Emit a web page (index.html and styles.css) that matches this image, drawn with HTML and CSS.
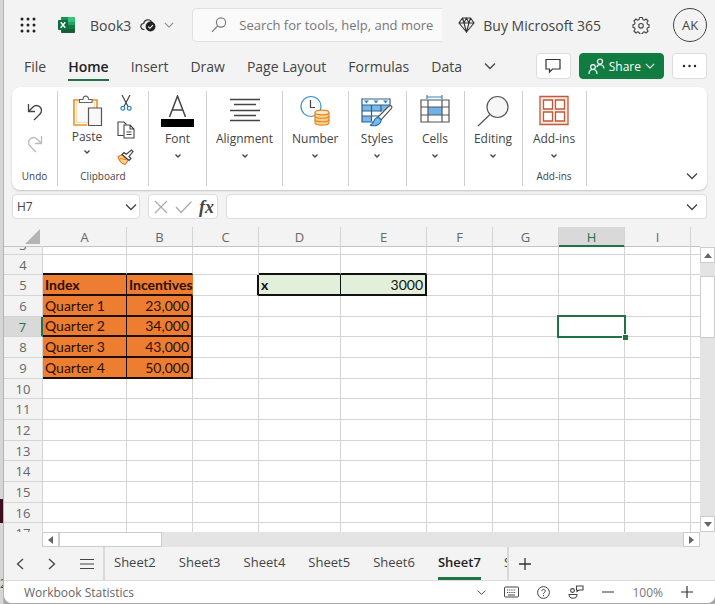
FILE: index.html
```html
<!DOCTYPE html>
<html lang="en">
<head>
    <meta charset="UTF-8">
    <meta name="viewport" content="width=device-width, initial-scale=1.0">
    <title>Book3</title>
    <link rel="stylesheet" href="styles.css">
</head>
<body>
    <svg width="0" height="0" class="defs">
        <symbol id="chev" viewBox="0 0 12 12"><path d="M1 3.5l5 5 5-5" fill="none" stroke="currentColor" stroke-width="1.3"/></symbol>
        <symbol id="chev-small" viewBox="0 0 6 6"><path d="M.5 1.5L3 4l2.5-2.5" fill="none" stroke="currentColor" stroke-width="1.3"/></symbol>
        <symbol id="lens" viewBox="0 0 16 16"><circle cx="10" cy="5.5" r="4.6" fill="none" stroke="currentColor" stroke-width="1.1"/><path d="M6.7 8.8L1 14.8" stroke="currentColor" stroke-width="1.2"/></symbol>
    </svg>

    <div class="backdrop">
        <div class="backdrop-mark"></div>
        <div class="backdrop-text">20</div>
    </div>

    <div class="app">
        <header class="titlebar">
            <button class="icon-btn launcher" aria-label="App launcher">
                <svg width="16" height="16" viewBox="0 0 16 16" fill="#222">
                    <circle cx="2" cy="2" r="1.5"/><circle cx="8" cy="2" r="1.5"/><circle cx="14" cy="2" r="1.5"/>
                    <circle cx="2" cy="8" r="1.5"/><circle cx="8" cy="8" r="1.5"/><circle cx="14" cy="8" r="1.5"/>
                    <circle cx="2" cy="14" r="1.5"/><circle cx="8" cy="14" r="1.5"/><circle cx="14" cy="14" r="1.5"/>
                </svg>
            </button>
            <svg class="logo" width="18" height="18" viewBox="0 0 18 18">
                <rect x="4" y="1" width="14" height="16" rx="1.5" fill="#21a366"/>
                <rect x="4" y="1" width="7" height="5" fill="#169154"/>
                <rect x="11" y="1" width="7" height="5" rx="1" fill="#33c481"/>
                <rect x="4" y="9" width="14" height="8" rx="1.5" fill="#185c37"/>
                <rect x="11" y="9" width="7" height="4" fill="#107c41"/>
                <rect x="1" y="4" width="10" height="10" rx="1" fill="#0f6f3c"/>
                <path d="M3.700 6.300l4.600 5.400M8.300 6.300l-4.600 5.400" stroke="#fff" stroke-width="1.5"/>
            </svg>
            <span class="book-name">Book3</span>
            <button class="icon-btn saved" aria-label="Saved">
                <svg width="16" height="14" viewBox="0 0 16 14">
                    <path d="M4.5 11.5H4A3 3 0 0 1 3.700 5.5 4.2 4.2 0 0 1 11.8 4.5" fill="none" stroke="#333" stroke-width="1.2"/>
                    <circle cx="10.5" cy="8.5" r="4.9" fill="#222"/>
                    <path d="M8.2 8.7l1.7 1.6 3-3.2" fill="none" stroke="#fff" stroke-width="1.1"/>
                </svg>
            </button>
            <button class="icon-btn book-menu" aria-label="File menu"><svg width="10" height="10"><use href="#chev"/></svg></button>
            <div class="search">
                <svg width="16" height="16"><use href="#lens"/></svg>
                <input type="text" aria-label="Search" placeholder="Search for tools, help, and more">
            </div>
            <button class="buy">
                <svg width="17" height="16" viewBox="0 0 17 16" fill="none" stroke="#333" stroke-width="1.1">
                    <path d="M4.5 1h8L16 6l-7.5 9L1 6zM1 6h15M4.5 1l1.5 5 2.5 9L11 6l1.5-5M6 6l2.5-5L11 6"/>
                </svg>
                Buy Microsoft 365
            </button>
            <button class="icon-btn settings" aria-label="Settings">
                <svg width="18" height="18" viewBox="0 0 18 18" fill="none" stroke="#444" stroke-width="1.1" stroke-linejoin="round">
                    <path d="M7.5 1.5h3l.4 2.1 1.4.6 1.8-1.2 2 2-1.2 1.8.6 1.4 1.5.3v2.9l-1.5.4-.6 1.4 1.2 1.8-2 2-1.8-1.2-1.4.6-.4 1.6h-3l-.4-1.6-1.4-.6-1.8 1.2-2-2 1.2-1.8-.6-1.4-1.5-.4V8.5l1.5-.3.6-1.4L1.9 5l2-2 1.8 1.2 1.4-.6z"/>
                    <circle cx="9" cy="9.8" r="2.3"/>
                </svg>
            </button>
            <button class="avatar">AK</button>
        </header>

        <nav class="menu">
            <button>File</button>
            <button class="active">Home</button>
            <button>Insert</button>
            <button>Draw</button>
            <button>Page Layout</button>
            <button>Formulas</button>
            <button>Data</button>
            <button class="more-tabs" aria-label="More tabs"><svg width="12" height="12"><use href="#chev"/></svg></button>
            <div class="actions">
                <button class="box-btn" aria-label="Comments">
                    <svg width="16" height="16" viewBox="0 0 16 16" fill="none" stroke="#333" stroke-width="1.2"><path d="M1 1.5h14v9.5H7.5L4.5 14v-3H1z"/></svg>
                </button>
                <button class="share">
                    <svg width="17" height="17" viewBox="0 0 17 17" fill="none" stroke="#fff" stroke-width="1.2">
                        <circle cx="5" cy="9" r="2.3"/><path d="M1 16c0-6 8-6 8 0"/>
                        <circle cx="12" cy="3.5" r="2.5"/><path d="M8.8 9c1-3.5 7-3 7.2 1.5"/>
                    </svg>
                    Share
                    <svg width="10" height="10"><use href="#chev"/></svg>
                </button>
                <button class="box-btn" aria-label="More options">
                    <svg width="15" height="4" viewBox="0 0 15 4" fill="#222"><circle cx="2" cy="2" r="1.2"/><circle cx="7.5" cy="2" r="1.2"/><circle cx="13" cy="2" r="1.2"/></svg>
                </button>
            </div>
        </nav>

        <section class="ribbon">
            <div class="group undo">
                <button class="icon-btn" aria-label="Undo">
                    <svg width="16" height="18" viewBox="0 0 16 18" fill="none" stroke="#444" stroke-width="1.3"><path d="M1.5 1v7.5H8M1.5 8.5L6 4c3-3 8-1 8.5 3 .2 2-.5 3-2 4.5L7 17"/></svg>
                </button>
                <button class="icon-btn" aria-label="Redo">
                    <svg width="16" height="18" viewBox="0 0 16 18" fill="none" stroke="#bbb" stroke-width="1.3"><path d="M14.5 1v7.5H8M14.5 8.5L10 4C7 1 2 3 1.5 7c-.2 2 .5 3 2 4.5L9 17"/></svg>
                </button>
                <span class="group-name">Undo</span>
            </div>
            <div class="group clipboard">
                <div class="clip-tools">
                    <button class="tool">
                        <svg width="31" height="32" viewBox="0 0 31 32" fill="none">
                            <path d="M9 5H2v25h13M19 5h6v8" stroke="#e8912d" stroke-width="1.6"/>
                            <path d="M4.5 7h18v6h-6v14.5h-12z" fill="#fafafa" stroke="#f7d9ad"/>
                            <path d="M7.5 7.5V4.5H11C11 0 16.5 0 16.5 4.5H20v3z" fill="#fff" stroke="#666" stroke-width="1.1"/>
                            <path d="M16.5 13h13v17.5h-13z" fill="#f8f8f8" stroke="#555" stroke-width="1.2"/>
                        </svg>
                        Paste
                        <svg class="drop" width="6" height="6"><use href="#chev-small"/></svg>
                    </button>
                    <div class="clip-side">
                        <button class="icon-btn" aria-label="Cut">
                            <svg width="12" height="16" viewBox="0 0 12 16" fill="none"><path d="M2 0l6 11.5M10 0L4 11.5" stroke="#444" stroke-width="1.2"/><circle cx="2.8" cy="13.3" r="1.9" stroke="#2f86c9" stroke-width="1.2"/><circle cx="9.2" cy="13.3" r="1.9" stroke="#2f86c9" stroke-width="1.2"/></svg>
                        </button>
                        <button class="icon-btn" aria-label="Copy">
                            <svg width="18" height="18" viewBox="0 0 18 18" fill="#fff" stroke="#444" stroke-width="1.1"><path d="M6.5 14.5h-5.5V1h6l2.5 2.5"/><path d="M7 4h6l4 4v9H7zM13 4v4h4M9.5 11h5M9.5 13.5h5"/></svg>
                        </button>
                        <button class="icon-btn" aria-label="Format painter">
                            <svg width="17" height="16" viewBox="0 0 17 16" fill="none"><path d="M1 7.5l4-1.5 6 5.5-3 4c-3-.5-6-4-7-8z" fill="#fbd59a" stroke="#e07b1a" stroke-width="1.2"/><path d="M3 9.500l6 1" stroke="#e07b1a" stroke-width="1.2"/><path d="M5 5.5l2-2 2.2 1.8L14.5 1 16 2.5l-4 5 2 2-2 2z" fill="#fff" stroke="#444" stroke-width="1.2"/></svg>
                        </button>
                    </div>
                </div>
                <span class="group-name">Clipboard</span>
            </div>
            <div class="group">
                <button class="tool">
                    <svg width="33" height="32" viewBox="0 0 33 32"><path d="M8.5 22L16.5 1l8 21M11.5 15h10" fill="none" stroke="#444" stroke-width="1.5"/><rect y="24" width="33" height="8"/></svg>
                    Font
                    <svg class="drop" width="6" height="6"><use href="#chev-small"/></svg>
                </button>
            </div>
            <div class="group">
                <button class="tool">
                    <svg width="30" height="32" viewBox="0 0 30 32" stroke="#444" stroke-width="1.3"><path d="M0 4.5h30M4 9.5h22M0 15.5h30M4 20.5h22M0 25.5h30"/></svg>
                    Alignment
                    <svg class="drop" width="6" height="6"><use href="#chev-small"/></svg>
                </button>
            </div>
            <div class="group">
                <button class="tool">
                    <svg width="30" height="32" viewBox="0 0 30 32" fill="none">
                        <circle cx="11" cy="11.5" r="10" stroke="#3c93c9" stroke-width="1.2" fill="#fafcfe"/><path d="M10.5 5v7.5H15" stroke="#444" stroke-width="1.2"/>
                        <path d="M15 17.5v10c0 3.5 14 3.5 14 0v-10" fill="#fbd28c" stroke="#e0882a" stroke-width="1.2"/>
                        <ellipse cx="22" cy="17.5" rx="7" ry="2.3" fill="#fde9c9" stroke="#e0882a" stroke-width="1.2"/>
                        <path d="M15 21c0 3 14 3 14 0M15 24.500c0 3 14 3 14 0" stroke="#e0882a" stroke-width="1.2"/>
                    </svg>
                    Number
                    <svg class="drop" width="6" height="6"><use href="#chev-small"/></svg>
                </button>
            </div>
            <div class="group">
                <button class="tool">
                    <svg width="32" height="32" viewBox="0 0 32 32" fill="none">
                        <path d="M1 4h28v23H1z" fill="#fff"/><path d="M1 10h28v6H1zM1 21h10v6H1z" fill="#79b8ea"/>
                        <path d="M20 16H1M29 10H1M18 21H1M10.5 10v16M20 10v7M14 27H1V4h28v6" stroke="#335f86" stroke-width="1.2"/>
                        <path d="M3 5.5h5l-2.5 3zM12.5 5.5h5l-2.5 3zM22 5.5h5l-2.5 3z" fill="#2f86c9"/>
                        <path d="M17 22L27 12c3-2.5 5-1 3 2L20 25z" fill="#fff" stroke="#555" stroke-width="1.2"/>
                        <path d="M9 30c4 0 3-6 7-7.5 3 0 5 2.5 3.5 5C17.5 31 12 31.5 9 30z" fill="#79b8ea" stroke="#1f6fb0" stroke-width="1.1"/>
                    </svg>
                    Styles
                    <svg class="drop" width="6" height="6"><use href="#chev-small"/></svg>
                </button>
            </div>
            <div class="group">
                <button class="tool">
                    <svg width="30" height="32" viewBox="0 0 30 32" fill="none">
                        <path d="M7 0v4M22 0v4M7 2h15" stroke="#2f86c9" stroke-width="1.2"/>
                        <path d="M8 12h14v8H8z" fill="#6fb2ea"/>
                        <path d="M1 5h28v22H1zM8 5v22M22 5v22M1 12h28M1 20h28" stroke="#555" stroke-width="1.2"/>
                    </svg>
                    Cells
                    <svg class="drop" width="6" height="6"><use href="#chev-small"/></svg>
                </button>
            </div>
            <div class="group">
                <button class="tool">
                    <svg width="32" height="32" viewBox="0 0 32 32" fill="none" stroke="#555" stroke-width="1.2"><circle cx="20.5" cy="12" r="10.5" fill="#f7f7f7"/><path d="M13 19.5L1 31"/></svg>
                    Editing
                    <svg class="drop" width="6" height="6"><use href="#chev-small"/></svg>
                </button>
            </div>
            <div class="group addins">
                <button class="tool">
                    <svg width="30" height="32" viewBox="0 0 30 32" fill="#fff" stroke="#bf5a3a" stroke-width="1.3"><path d="M1 1.5h28v28H1z" fill="#fbe9e2"/><path d="M4.5 5h9v9h-9zM16.5 5h9v9h-9zM4.5 17h9v9h-9zM16.5 17h9v9h-9z"/></svg>
                    Add-ins
                    <svg class="drop" width="6" height="6"><use href="#chev-small"/></svg>
                </button>
                <span class="group-name">Add-ins</span>
            </div>
            <button class="icon-btn collapse" aria-label="Collapse ribbon"><svg width="12" height="12"><use href="#chev"/></svg></button>
        </section>

        <div class="formula-bar">
            <div class="name-box">
                <input type="text" aria-label="Name box" value="H7">
                <button class="icon-btn" aria-label="Names"><svg width="12" height="12"><use href="#chev"/></svg></button>
            </div>
            <div class="fx-box">
                <button class="icon-btn" aria-label="Cancel"><svg width="14" height="14" viewBox="0 0 14 14"><path d="M1 1l12 12M13 1L1 13" stroke="#aaa" stroke-width="1.2"/></svg></button>
                <button class="icon-btn" aria-label="Enter"><svg width="17" height="14" viewBox="0 0 17 14"><path d="M1 7l5 5.5L16.5 1.5" fill="none" stroke="#aaa" stroke-width="1.2"/></svg></button>
                <button class="fx">fx</button>
            </div>
            <div class="formula">
                <input type="text" aria-label="Formula">
                <button class="icon-btn" aria-label="Expand formula bar"><svg width="12" height="12"><use href="#chev"/></svg></button>
            </div>
        </div>

        <main class="sheet">
            <div class="grid">
                <table>
                    <colgroup>
                        <col class="c-head"><col class="c-a"><col class="c-std"><col class="c-std"><col class="c-d"><col class="c-e"><col class="c-std"><col class="c-std"><col class="c-std"><col class="c-std"><col>
                    </colgroup>
                    <thead>
                        <tr>
                            <th class="corner"><svg width="15" height="15" viewBox="0 0 15 15"><path d="M15 0v15H0z" fill="#b5b5b5"/></svg></th>
                            <th>A</th><th>B</th><th>C</th><th>D</th><th>E</th><th>F</th><th>G</th><th class="on">H</th><th>I</th><th></th>
                        </tr>
                    </thead>
                    <tbody>
                        <tr class="cut"><th><div>3</div></th><td></td><td></td><td></td><td></td><td></td><td></td><td></td><td></td><td></td><td></td></tr>
                        <tr><th>4</th><td class="line-b"></td><td class="line-b"></td><td></td><td class="line-b"></td><td class="line-b"></td><td></td><td></td><td></td><td></td><td></td></tr>
                        <tr><th>5</th><td class="orange bold">Index</td><td class="orange bold head-b">Incentives</td><td class="line-r"></td><td class="green bold">x</td><td class="green num">3000</td><td></td><td></td><td></td><td></td><td></td></tr>
                        <tr><th>6</th><td class="orange">Quarter 1</td><td class="orange num">23,000</td><td></td><td></td><td></td><td></td><td></td><td></td><td></td><td></td></tr>
                        <tr><th class="on">7</th><td class="orange">Quarter 2</td><td class="orange num">34,000</td><td></td><td></td><td></td><td></td><td></td><td class="selected"><div class="cursor"></div></td><td></td><td></td></tr>
                        <tr><th>8</th><td class="orange">Quarter 3</td><td class="orange num">43,000</td><td></td><td></td><td></td><td></td><td></td><td></td><td></td><td></td></tr>
                        <tr><th>9</th><td class="orange">Quarter 4</td><td class="orange num">50,000</td><td></td><td></td><td></td><td></td><td></td><td></td><td></td><td></td></tr>
                        <tr><th>10</th><td></td><td></td><td></td><td></td><td></td><td></td><td></td><td></td><td></td><td></td></tr>
                        <tr><th>11</th><td></td><td></td><td></td><td></td><td></td><td></td><td></td><td></td><td></td><td></td></tr>
                        <tr><th>12</th><td></td><td></td><td></td><td></td><td></td><td></td><td></td><td></td><td></td><td></td></tr>
                        <tr><th>13</th><td></td><td></td><td></td><td></td><td></td><td></td><td></td><td></td><td></td><td></td></tr>
                        <tr><th>14</th><td></td><td></td><td></td><td></td><td></td><td></td><td></td><td></td><td></td><td></td></tr>
                        <tr><th>15</th><td></td><td></td><td></td><td></td><td></td><td></td><td></td><td></td><td></td><td></td></tr>
                        <tr><th>16</th><td></td><td></td><td></td><td></td><td></td><td></td><td></td><td></td><td></td><td></td></tr>
                        <tr><th>17</th><td></td><td></td><td></td><td></td><td></td><td></td><td></td><td></td><td></td><td></td></tr>
                    </tbody>
                </table>
            </div>
            <div class="vscroll">
                <button aria-label="Scroll up"><svg width="8" height="5" viewBox="0 0 8 5"><path d="M4 0l4 5H0z" fill="#666"/></svg></button>
                <div class="vthumb"></div>
                <button class="end" aria-label="Scroll down"><svg width="8" height="5" viewBox="0 0 8 5"><path d="M4 5l4-5H0z" fill="#666"/></svg></button>
            </div>
        </main>
        <div class="hscroll">
            <button aria-label="Scroll left"><svg width="5" height="8" viewBox="0 0 5 8"><path d="M0 4l5-4v8z" fill="#666"/></svg></button>
            <div class="hthumb"></div>
            <button class="end" aria-label="Scroll right"><svg width="5" height="8" viewBox="0 0 5 8"><path d="M5 4L0 0v8z" fill="#666"/></svg></button>
        </div>

        <div class="tabs">
            <div class="tab-nav">
                <button class="icon-btn" aria-label="Previous sheet"><svg width="8" height="12" viewBox="0 0 8 12"><path d="M7 1L1.5 6 7 11" fill="none" stroke="#444" stroke-width="1.3"/></svg></button>
                <button class="icon-btn" aria-label="Next sheet"><svg width="8" height="12" viewBox="0 0 8 12"><path d="M1 1l5.5 5L1 11" fill="none" stroke="#444" stroke-width="1.3"/></svg></button>
                <button class="icon-btn" aria-label="All sheets"><svg width="14" height="12" viewBox="0 0 14 12"><path d="M0 1.5h14M0 6h14M0 10.5h14" stroke="#444" stroke-width="1.2"/></svg></button>
            </div>
            <div class="tab-list">
                <button>Sheet2</button>
                <button>Sheet3</button>
                <button>Sheet4</button>
                <button>Sheet5</button>
                <button>Sheet6</button>
                <button class="active">Sheet7</button>
                <button>Sheet8</button>
            </div>
            <button class="icon-btn add" aria-label="New sheet"><svg width="12" height="12" viewBox="0 0 12 12"><path d="M6 0v12M0 6h12" stroke="#333" stroke-width="1.3"/></svg></button>
        </div>

        <footer class="status">
            <span class="stats">Workbook Statistics</span>
            <button class="icon-btn" aria-label="Options"><svg width="9" height="9"><use href="#chev"/></svg></button>
            <button class="icon-btn" aria-label="Keyboard">
                <svg width="15" height="12" viewBox="0 0 15 12" fill="none" stroke="#444"><rect x=".5" y="1" width="14" height="10" rx="1"/><path d="M3 4h9M3 6.5h9" stroke-dasharray="1.2 1"/><path d="M4 9h7"/></svg>
            </button>
            <button class="icon-btn" aria-label="Help">
                <svg width="13" height="13" viewBox="0 0 13 13" fill="none" stroke="#444"><circle cx="6.5" cy="6.5" r="5.9"/><path d="M4.8 5.2c0-2.500 3.700-2.200 3.500 0-.1 1.200-1.800 1.300-1.800 2.800M6.5 9v1.2"/></svg>
            </button>
            <button class="icon-btn" aria-label="Feedback">
                <svg width="16" height="14" viewBox="0 0 16 14" fill="none" stroke="#444" stroke-width="1.1"><circle cx="4.5" cy="5.5" r="1.9"/><path d="M1 9.5h8c0 5-8 5-8 0zM8.5 1h6.5v4h-4L9 6.500 9 5h-.5z"/></svg>
            </button>
            <button class="icon-btn" aria-label="Zoom out"><svg width="12" height="12" viewBox="0 0 12 12"><path d="M0 6h12" stroke="#333" stroke-width="1.2"/></svg></button>
            <span class="zoom">100%</span>
            <button class="icon-btn" aria-label="Zoom in"><svg width="12" height="12" viewBox="0 0 12 12"><path d="M6 0v12M0 6h12" stroke="#333" stroke-width="1.2"/></svg></button>
        </footer>
    </div>
</body>
</html>
```
FILE: styles.css
```css
* {
    box-sizing: border-box;
}

body {
    display: flex;
    height: 100vh;
    margin: 0;
    overflow: hidden;
    background-color: #a8a8a8;
    color: #444;
    font-family: "Open Sans", "Noto Sans", sans-serif;
    font-size: 13px;
}

button, input {
    margin: 0;
    padding: 0;
    border: none;
    background: none;
    color: inherit;
    font: inherit;
}

svg {
    display: block;
    flex: none;
}

.defs {
    position: absolute;
}

.icon-btn {
    display: flex;
    align-items: center;
    justify-content: center;
}

/* strip of the window behind */
.backdrop {
    display: flex;
    flex-direction: column;
    justify-content: flex-end;
    width: 4px;
    overflow: hidden;
    background-color: #d6d6d6;
    border-right: 1px solid #b4b4b4;
}

.backdrop-mark {
    height: 24px;
    margin-bottom: 52px;
    background-color: #3f0d22;
}

.backdrop-text {
    height: 29px;
    font-size: 12px;
}

.app {
    display: flex;
    flex: 1;
    flex-direction: column;
    min-width: 0;
    margin-bottom: 1px;
    overflow: hidden;
    background-color: #f3f3f3;
    border-radius: 0 0 8px 8px;
}

/* title bar */
.titlebar {
    display: flex;
    align-items: center;
    height: 50px;
    padding: 0 8px 0 16px;
    font-size: 14px;
}

.logo {
    margin-left: 21px;
}

.book-name {
    margin-left: 15px;
}

.saved {
    margin-left: 9px;
}

.book-menu {
    margin-left: 8px;
    color: #888;
}

.search {
    display: flex;
    flex: 1;
    align-items: center;
    gap: 12px;
    min-width: 0;
    height: 34px;
    margin-left: 18px;
    padding-left: 18px;
    background-color: #fafafa;
    border: 1px solid #e0e0e0;
    border-right: none;
    border-radius: 5px 0 0 5px;
    color: #777;
    font-size: 13px;
}

.search input {
    flex: 1;
    min-width: 0;
}

.search input::placeholder {
    color: #777;
}

.buy {
    display: flex;
    align-items: center;
    gap: 8px;
    margin-left: 16px;
    white-space: nowrap;
}

.settings {
    margin-left: 31px;
}

.avatar {
    width: 34px;
    height: 34px;
    margin-left: 23px;
    border: 1px solid #444;
    border-radius: 50%;
    font-size: 13px;
}

/* menu */
.menu {
    display: flex;
    gap: 22px;
    align-items: center;
    height: 37px;
    padding: 0 8px 5px 20px;
}

.menu > button {
    height: 30px;
    padding-top: 2px;
    border-bottom: 2px solid transparent;
    font-size: 14px;
    white-space: nowrap;
}

.menu > .active {
    border-color: #217346;
    color: #222;
    font-weight: 600;
}

.actions {
    display: flex;
    gap: 8px;
    margin-left: auto;
}

.box-btn, .share {
    display: flex;
    align-items: center;
    justify-content: center;
    height: 26px;
    border: 1px solid #ddd;
    border-radius: 4px;
}

.box-btn {
    width: 35px;
    background-color: #fff;
}

.share {
    gap: 4px;
    padding: 0 8px;
    background-color: #107c41;
    border-color: #107c41;
    color: #fff;
    font-size: 12px;
}

/* ribbon */
.ribbon {
    display: flex;
    height: 103px;
    margin: 0 8px;
    padding: 4px 0;
    background-color: #fff;
    border-radius: 8px;
    box-shadow: 0 1px 2px rgba(0, 0, 0, 0.2);
}

.group {
    display: flex;
    flex-direction: column;
    align-items: center;
    min-width: 58px;
    padding: 4px 9px 2px;
    border-right: 1px solid #d0d0d0;
}

.group-name {
    margin-top: auto;
    font-size: 10px;
    line-height: 16px;
}

.tool {
    display: flex;
    flex-direction: column;
    align-items: center;
    font-size: 12px;
    line-height: 24px;
}

.drop {
    margin-top: 2px;
}

.undo {
    gap: 14px;
    min-width: 46px;
    padding-top: 12px;
}

.clipboard {
    width: 91px;
}

.clipboard .tool {
    line-height: 20px;
}

.addins {
    min-width: 64px;
}

.clip-tools {
    display: flex;
    gap: 14px;
}

.clip-side {
    display: flex;
    flex-direction: column;
    align-items: center;
    gap: 10px;
}

.collapse {
    align-self: flex-end;
    margin: 0 9px 4px auto;
}

/* formula bar */
.formula-bar {
    display: flex;
    gap: 8px;
    height: 33px;
    padding: 4px 8px;
    font-size: 12px;
}

.name-box, .fx-box, .formula {
    display: flex;
    align-items: center;
    background-color: #fff;
    border: 1px solid #ddd;
    border-radius: 4px;
}

.name-box {
    width: 128px;
    padding: 0 2px 0 4px;
}

.formula {
    flex: 1;
    padding-right: 8px;
}

.name-box input, .formula input {
    flex: 1;
    min-width: 0;
}

.fx-box {
    gap: 7px;
    width: 70px;
    padding-left: 5px;
}

.fx {
    font-family: "Liberation Serif", serif;
    font-size: 18px;
    font-style: italic;
    font-weight: bold;
    line-height: 20px;
}

/* sheet */
.sheet {
    display: flex;
    flex: 1;
    min-height: 0;
    padding-top: 4px;
}

.grid {
    flex: 1;
    min-width: 0;
    overflow: hidden;
}

table {
    width: 100%;
    table-layout: fixed;
    border-spacing: 0;
}

.c-head {
    width: 39px;
}

.c-a {
    width: 84px;
}

.c-std {
    width: 66px;
}

.c-d {
    width: 82px;
}

.c-e {
    width: 86px;
}

th, td {
    height: 21px;
    padding: 0 2px;
    border-right: 1px solid #d4d4d4;
    border-bottom: 1px solid #d4d4d4;
    font-family: Lato, sans-serif;
    font-size: 14px;
    line-height: 18px;
    white-space: nowrap;
}

td {
    background-color: #fff;
    color: #111;
}

th {
    background-color: #f3f3f3;
    color: #666;
    font-family: "Open Sans", sans-serif;
    font-size: 13px;
    font-weight: normal;
}

thead th {
    height: 20px;
    border-bottom-color: #c4c4c4;
}

tr > :last-child {
    border-right: none;
}

/* rows alternate 20 and 21 px */
tbody tr:nth-child(3n+2) > * {
    height: 20px;
}

.corner {
    border-right-color: transparent;
}

.corner svg {
    margin-left: auto;
}

tbody .cut > * {
    height: 8px;
}

.cut div {
    display: flex;
    align-items: flex-end;
    justify-content: center;
    height: 7px;
    overflow: hidden;
}

th.on {
    background-color: #d9d9d9;
    color: #217346;
}

thead th.on {
    border-color: #217346;
    border-right-color: #d4d4d4;
    box-shadow: inset 0 -1px #217346;
}

tbody th.on {
    border-right: 2px solid #217346;
}

.orange {
    background-color: #ed7d31;
    border-color: #1d0f06;
    border-bottom-width: 2px;
    color: #2b0f00;
}

.green {
    background-color: #e2efda;
    border-color: #111;
    border-bottom-width: 2px;
}

.num {
    text-align: right;
}

.orange.num, .green.num {
    border-right-width: 2px;
}

.head-b {
    border-right-color: #ed7d31;
}

.bold {
    font-weight: bold;
}

.line-b {
    border-bottom: 2px solid #111;
}

.line-r {
    border-right: 2px solid #111;
}

.selected {
    position: relative;
}

.cursor {
    position: absolute;
    inset: -2px;
    border: 2px solid #217346;
}

.cursor::after {
    content: "";
    position: absolute;
    right: -4px;
    bottom: -4px;
    width: 5px;
    height: 5px;
    background-color: #217346;
    border: solid #fff;
    border-width: 1px 0 0 1px;
}

/* scroll bars */
.vscroll {
    display: flex;
    flex-direction: column;
    width: 15px;
    margin-top: 20px;
    background-color: #e4e4e4;
}

.vscroll button, .hscroll button {
    display: flex;
    align-items: center;
    justify-content: center;
    width: 17px;
    height: 15px;
    background-color: #fff;
    border: 1px solid #ccc;
}

.vscroll button {
    width: 15px;
    height: 16px;
}

.vthumb {
    height: 62px;
    margin-top: 13px;
    background-color: #fff;
    border: 1px solid #ccc;
}

.vscroll .end {
    margin-top: auto;
}

.hscroll {
    display: flex;
    margin: 0 15px 0 38px;
    background-color: #e4e4e4;
}

.hthumb {
    width: 103px;
    background-color: #fff;
    border: 1px solid #ccc;
}

.hscroll .end {
    margin-left: auto;
}

/* sheet tabs */
.tabs {
    display: flex;
    height: 34px;
    border-bottom: 1px solid #ddd;
}

.tab-nav {
    display: flex;
    gap: 24px;
    width: 101px;
    padding-left: 12px;
    border-right: 2px solid #d8d8d8;
}

.tab-list {
    display: flex;
    gap: 23px;
    width: 404px;
    padding-left: 9px;
    overflow: hidden;
    border-right: 2px solid #d8d8d8;
}

.tab-list button {
    border-bottom: 3px solid transparent;
}

.tab-list .active {
    border-color: #217346;
    color: #222;
    font-weight: 600;
}

.add {
    margin-left: 10px;
}

/* status bar */
.status {
    display: flex;
    align-items: center;
    gap: 18px;
    height: 22px;
    padding: 0 22px 0 20px;
    background-color: #fff;
    font-size: 12px;
}

.stats {
    margin-right: auto;
    color: #666;
}

.zoom {
    color: #777;
}
```
